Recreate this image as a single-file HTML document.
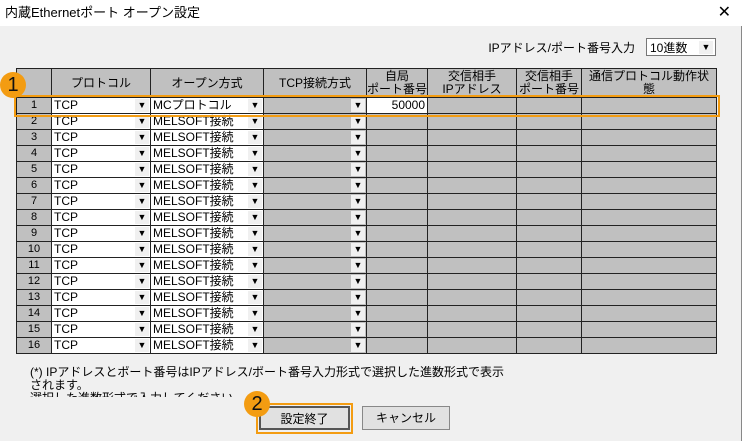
<!DOCTYPE html><html><head><meta charset="utf-8"><style>
body{margin:0;width:742px;height:441px;background:#f0f0f0;font-family:"Liberation Sans","Noto Sans CJK JP",sans-serif;position:relative;overflow:hidden;border-right:1px solid #888;box-sizing:border-box}
.title{position:absolute;left:0;top:0;width:742px;height:26px;background:#fff;font-size:13px;line-height:26px;padding-left:5px;box-sizing:border-box}
.x{position:absolute;right:10px;top:0;font-size:16px;line-height:26px}
table{position:absolute;left:16px;top:68px;border-collapse:collapse;table-layout:fixed;font-size:12px}
td{border:1px solid #222;height:15px;padding:0;background:#c0c0c0;line-height:15px;overflow:hidden;white-space:nowrap}
th{border:1px solid #222;background:#c0c0c0;font-weight:normal;font-size:12px;height:28px;padding:0;overflow:hidden}
th div{height:28px;line-height:13px;overflow:hidden;white-space:nowrap;display:flex;flex-direction:column;justify-content:center}
td.n{text-align:center;font-size:11px}
td.w{background:#fff;padding-left:2px;position:relative}
td.g{position:relative}
.a{position:absolute;right:1px;top:1px;width:14px;height:13px;background:#f0f0f0;font-size:9px;line-height:13px;text-align:center}
.ip{position:absolute;top:39px;right:106px;font-size:12px}
.sel{position:absolute;left:646px;top:38px;width:70px;height:18px;border:1px solid #777;background:#fff;font-size:12px;line-height:18px;box-sizing:border-box;padding-left:3px}
.sel .a{top:2px;right:2px}
.c{position:absolute;width:26px;height:26px;border-radius:50%;background:#f39c12;color:#111;font-size:20px;text-align:center;line-height:26px}
.o{position:absolute;border:2px solid #f39c12;box-sizing:border-box}
.btn{position:absolute;height:24px;border:1px solid #888;background:#e1e1e1;font-size:12px;text-align:center;line-height:22px;box-sizing:border-box}
.note{position:absolute;left:30px;top:366px;font-size:12px;line-height:13px;height:31px;overflow:hidden;width:510px;white-space:nowrap}
</style></head><body>
<div class="title">内蔵Ethernetポート オープン設定</div><div class="x">✕</div>
<div class="ip">IPアドレス/ポート番号入力</div>
<div class="sel">10進数<span class="a">▼</span></div>
<table>
<colgroup><col style="width:35px"><col style="width:99px"><col style="width:113px"><col style="width:103px"><col style="width:61px"><col style="width:89px"><col style="width:65px"><col style="width:135px"></colgroup>
<tr><th><div></div></th><th><div>プロトコル</div></th><th><div>オープン方式</div></th><th><div>TCP接続方式</div></th><th><div>自局<br>ポート番号</div></th><th><div>交信相手<br>IPアドレス</div></th><th><div>交信相手<br>ポート番号</div></th><th><div>通信プロトコル動作状<br>態</div></th></tr>
<tr><td class="n">1</td><td class="w">TCP<span class="a">▼</span></td><td class="w">MCプロトコル<span class="a">▼</span></td><td class="g"><span class="a">▼</span></td><td class="w" style="text-align:right;padding-right:2px">50000</td><td></td><td></td><td></td></tr>
<tr><td class="n">2</td><td class="w">TCP<span class="a">▼</span></td><td class="w">MELSOFT接続<span class="a">▼</span></td><td class="g"><span class="a">▼</span></td><td></td><td></td><td></td><td></td></tr>
<tr><td class="n">3</td><td class="w">TCP<span class="a">▼</span></td><td class="w">MELSOFT接続<span class="a">▼</span></td><td class="g"><span class="a">▼</span></td><td></td><td></td><td></td><td></td></tr>
<tr><td class="n">4</td><td class="w">TCP<span class="a">▼</span></td><td class="w">MELSOFT接続<span class="a">▼</span></td><td class="g"><span class="a">▼</span></td><td></td><td></td><td></td><td></td></tr>
<tr><td class="n">5</td><td class="w">TCP<span class="a">▼</span></td><td class="w">MELSOFT接続<span class="a">▼</span></td><td class="g"><span class="a">▼</span></td><td></td><td></td><td></td><td></td></tr>
<tr><td class="n">6</td><td class="w">TCP<span class="a">▼</span></td><td class="w">MELSOFT接続<span class="a">▼</span></td><td class="g"><span class="a">▼</span></td><td></td><td></td><td></td><td></td></tr>
<tr><td class="n">7</td><td class="w">TCP<span class="a">▼</span></td><td class="w">MELSOFT接続<span class="a">▼</span></td><td class="g"><span class="a">▼</span></td><td></td><td></td><td></td><td></td></tr>
<tr><td class="n">8</td><td class="w">TCP<span class="a">▼</span></td><td class="w">MELSOFT接続<span class="a">▼</span></td><td class="g"><span class="a">▼</span></td><td></td><td></td><td></td><td></td></tr>
<tr><td class="n">9</td><td class="w">TCP<span class="a">▼</span></td><td class="w">MELSOFT接続<span class="a">▼</span></td><td class="g"><span class="a">▼</span></td><td></td><td></td><td></td><td></td></tr>
<tr><td class="n">10</td><td class="w">TCP<span class="a">▼</span></td><td class="w">MELSOFT接続<span class="a">▼</span></td><td class="g"><span class="a">▼</span></td><td></td><td></td><td></td><td></td></tr>
<tr><td class="n">11</td><td class="w">TCP<span class="a">▼</span></td><td class="w">MELSOFT接続<span class="a">▼</span></td><td class="g"><span class="a">▼</span></td><td></td><td></td><td></td><td></td></tr>
<tr><td class="n">12</td><td class="w">TCP<span class="a">▼</span></td><td class="w">MELSOFT接続<span class="a">▼</span></td><td class="g"><span class="a">▼</span></td><td></td><td></td><td></td><td></td></tr>
<tr><td class="n">13</td><td class="w">TCP<span class="a">▼</span></td><td class="w">MELSOFT接続<span class="a">▼</span></td><td class="g"><span class="a">▼</span></td><td></td><td></td><td></td><td></td></tr>
<tr><td class="n">14</td><td class="w">TCP<span class="a">▼</span></td><td class="w">MELSOFT接続<span class="a">▼</span></td><td class="g"><span class="a">▼</span></td><td></td><td></td><td></td><td></td></tr>
<tr><td class="n">15</td><td class="w">TCP<span class="a">▼</span></td><td class="w">MELSOFT接続<span class="a">▼</span></td><td class="g"><span class="a">▼</span></td><td></td><td></td><td></td><td></td></tr>
<tr><td class="n">16</td><td class="w">TCP<span class="a">▼</span></td><td class="w">MELSOFT接続<span class="a">▼</span></td><td class="g"><span class="a">▼</span></td><td></td><td></td><td></td><td></td></tr>
</table>
<div class="o" style="left:14px;top:95px;width:706px;height:22px"></div>
<div class="c" style="left:0;top:72px">1</div>
<div class="note">(*) IPアドレスとポート番号はIPアドレス/ポート番号入力形式で選択した進数形式で表示<br>されます。<br>選択した進数形式で入力してください。</div>
<div class="o" style="left:256px;top:403px;width:97px;height:31px"></div>
<div class="btn" style="left:259px;top:406px;width:91px;border:2px solid #555">設定終了</div>
<div class="btn" style="left:362px;top:406px;width:88px">キャンセル</div>
<div class="c" style="left:244px;top:391px">2</div>
</body></html>
